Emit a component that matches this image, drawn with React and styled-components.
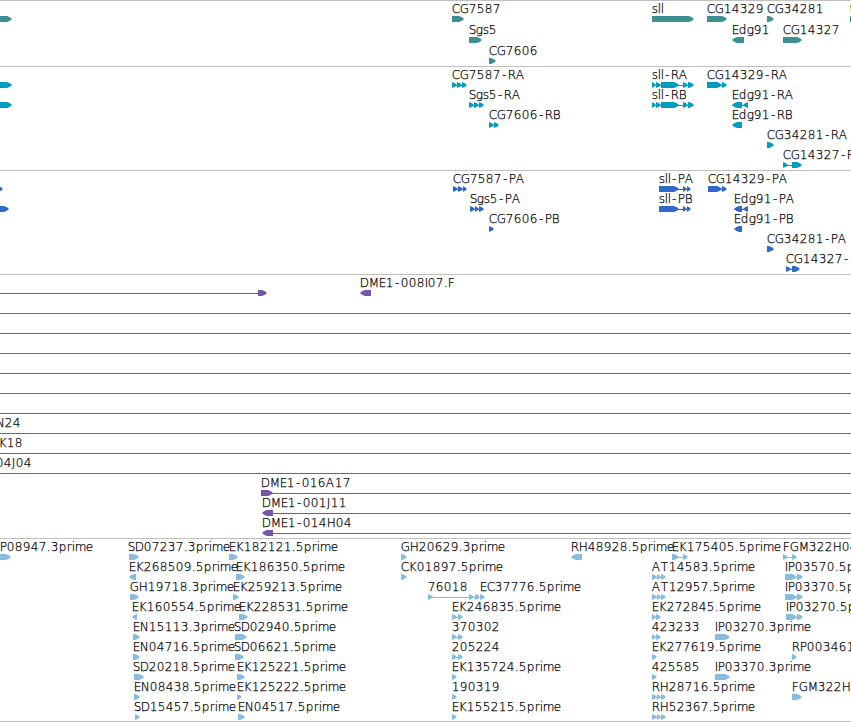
// React
import React from 'react'
import styled, { createGlobalStyle } from 'styled-components'

// Advance widths of the label font, in whole pixels (digits are 8)
const ADVANCES = {
  A: 9, B: 7, C: 8, D: 9, E: 7, F: 7, G: 9, H: 9, I: 3, J: 4, K: 8, M: 10,
  N: 9, P: 7, R: 8, S: 7, T: 8, d: 8, e: 7, g: 7, i: 3, l: 3, m: 11, p: 8,
  r: 5, s: 6, '-': 7, '.': 4
}

const HEAD = 5
const WIDTH = 851

// feature: [row, label, blocks, options]
const GENES = [
  [0, '', [[-20, 12]]],
  [0, 'CG7587', [[452, 464]]],
  [1, 'Sgs5', [[469, 482]]],
  [2, 'CG7606', [[489, 496]]],
  [0, 'sll', [[652, 694]]],
  [0, 'CG14329', [[707, 727]]],
  [1, 'Edg91', [[732, 744]], { reverse: true }],
  [0, 'CG34281', [[767, 774]]],
  [1, 'CG14327', [[783, 802]]],
  [0, 't', [[850, 870]]]
]

const TRANSCRIPTS = [
  [0, '', [[-20, 12]]],
  [1, '', [[-20, 12]]],
  [0, 'CG7587-RA', [[452, 457], [457, 462], [462, 467]]],
  [1, 'Sgs5-RA', [[469, 474], [474, 479], [479, 484]]],
  [2, 'CG7606-RB', [[489, 494], [494, 499]]],
  [0, 'sll-RA', [[652, 656], [656, 661], [661, 679], [683, 688], [688, 694]]],
  [1, 'sll-RB', [[652, 656], [656, 661], [661, 679], [683, 688], [688, 694]]],
  [0, 'CG14329-RA', [[707, 722], [722, 727]]],
  [1, 'Edg91-RA', [[732, 742], [743, 748]], { reverse: true }],
  [2, 'Edg91-RB', [[732, 742]], { reverse: true }],
  [3, 'CG34281-RA', [[767, 774]]],
  [4, 'CG14327-RA', [[783, 788], [792, 802]]]
]

const PROTEINS = [
  [0, '', [[-20, 3]]],
  [1, '', [[-20, 9]]],
  [0, 'CG7587-PA', [[453, 458], [458, 463], [463, 467]]],
  [1, 'Sgs5-PA', [[470, 475], [475, 479], [479, 484]]],
  [2, 'CG7606-PB', [[489, 494]]],
  [0, 'sll-PA', [[659, 679], [683, 687], [687, 691]]],
  [1, 'sll-PB', [[659, 679], [683, 687], [687, 691]]],
  [0, 'CG14329-PA', [[708, 722], [722, 727]]],
  [1, 'Edg91-PA', [[734, 742], [743, 748]], { reverse: true }],
  [2, 'Edg91-PB', [[734, 742]], { reverse: true }],
  [3, 'CG34281-PA', [[767, 774]]],
  [4, 'CG14327-', [[786, 791], [792, 800]]]
]

const BAC_ENDS = [
  [0, '', [[258, 267]], { line: [0, 260] }],
  [0, 'DME1-008I07.F', [[360, 371]], { reverse: true }],
  ...[1, 2, 3, 4, 5, 6].map(row => [row, '', [], { line: [0, WIDTH] }]),
  [7, 'N24', [], { line: [0, WIDTH], labelX: -4 }],
  [8, 'K18', [], { line: [0, WIDTH], labelX: -1 }],
  [9, '04J04', [], { line: [0, WIDTH], labelX: -4 }],
  [10, 'DME1-016A17', [[261, 273]], { line: [270, WIDTH] }],
  [11, 'DME1-001J11', [[262, 273]], { line: [270, WIDTH], reverse: true }],
  [12, 'DME1-014H04', [[262, 273]], { line: [270, WIDTH], reverse: true }]
]

const THREE = [[652, 657], [657, 661], [661, 666]]
const TWO = [[652, 656], [656, 661]]
const PAIR = [[452, 457], [458, 463]]

const ESTS = [
  [0, 'P08947.3prime', [[-10, 11]], { labelX: 0 }],
  [0, 'SD07237.3prime', [[129, 139]], { labelX: 128 }],
  [1, 'EK268509.5prime', [[129, 136]], { reverse: true }],
  [2, 'GH19718.3prime', [[130, 139]]],
  [3, 'EK160554.5prime', [[132, 137]], { reverse: true }],
  [4, 'EN15113.3prime', [[133, 140]]],
  [5, 'EN04716.5prime', [[133, 140]]],
  [6, 'SD20218.5prime', [[134, 144]], { labelX: 133 }],
  [7, 'EN08438.5prime', [[134, 140]]],
  [8, 'SD15457.5prime', [[135, 140]], { labelX: 134 }],
  [0, 'EK182121.5prime', [[229, 238]]],
  [1, 'EK186350.5prime', [[236, 245]]],
  [2, 'EK259213.5prime', [[233, 239]]],
  [3, 'EK228531.5prime', [[239, 248]]],
  [4, 'SD02940.5prime', [[235, 247]], { labelX: 234 }],
  [5, 'SD06621.5prime', [[235, 244]], { labelX: 234 }],
  [6, 'EK125221.5prime', [[237, 245]]],
  [7, 'EK125222.5prime', [[237, 242]]],
  [8, 'EN04517.5prime', [[238, 245]]],
  [0, 'GH20629.3prime', [[401, 407]]],
  [1, 'CK01897.5prime', [[401, 407]]],
  [2, '76018', [[428, 433], [469, 474], [475, 480]]],
  [2, 'EC37776.5prime', [[480, 485]]],
  [3, 'EK246835.5prime', PAIR],
  [4, '370302', PAIR],
  [5, '205224', PAIR],
  [6, 'EK135724.5prime', [[452, 457]]],
  [7, '190319', [[452, 457]]],
  [8, 'EK155215.5prime', [[452, 457]]],
  [0, 'RH48928.5prime', [[571, 582]], { reverse: true }],
  [0, 'EK175405.5prime', [[672, 679], [683, 688]]],
  [1, 'AT14583.5prime', THREE],
  [2, 'AT12957.5prime', THREE],
  [3, 'EK272845.5prime', TWO],
  [4, '423233', TWO],
  [5, 'EK277619.5prime', [[652, 657]]],
  [6, '425585', [[652, 657]]],
  [7, 'RH28716.5prime', THREE],
  [8, 'RH52367.5prime', THREE],
  [4, 'IP03270.3prime', [[715, 730]]],
  [6, 'IP03370.3prime', [[715, 730]]],
  [0, 'FGM322H04', [[783, 788], [792, 797]]],
  [1, 'IP03570.5p', [[785, 797], [797, 803]]],
  [2, 'IP03370.5p', [[785, 797], [797, 803]]],
  [3, 'IP03270.5p', [[786, 797], [797, 803]]],
  [5, 'RP003461', [[792, 797]]],
  [7, 'FGM322H', [[792, 802]]]
]

const TRACKS = [
  { name: 'genes', color: '#3d8f94', height: 66, pitch: 21, features: GENES },
  { name: 'transcripts', color: '#009dbf', height: 104, pitch: 20, features: TRANSCRIPTS },
  { name: 'proteins', color: '#2f6acb', height: 104, pitch: 20, features: PROTEINS },
  { name: 'bac-ends', color: '#7557a7', height: 264, pitch: 20, features: BAC_ENDS },
  { name: 'ests', color: '#87bcde', height: 183, pitch: 20, features: ESTS }
]

const charPositions = (text, start) => {
  let x = start - 0.3
  return text
    .split('')
    .map(char => {
      const current = char === '-' ? x + 1.2 : x
      x += ADVANCES[char] || 8
      return current
    })
    .join(' ')
}

// A block whose head bulges a little before it meets the tip
const blockPoints = ([x0, x1], y, reverse) => {
  const head = Math.min(HEAD, x1 - x0)
  const [tail, tip, dir] = reverse ? [x1, x0, 1] : [x0, x1, -1]
  const neck = tip + dir * head
  const cheek = tip + dir * 2
  return [
    [tail, y],
    [neck, y],
    [cheek, y + 1.3],
    [tip, y + 3],
    [cheek, y + 4.7],
    [neck, y + 6],
    [tail, y + 6]
  ].join(' ')
}

const Feature = ({ top, label, blocks, options = {} }) => {
  const { reverse, line, labelX } = options
  const span = line || (blocks.length > 1 && [blocks[0][0], blocks[blocks.length - 1][1] - 2])
  const start = labelX !== undefined ? labelX : blocks.length && blocks[0][0]
  return (
    <g>
      {span && <Connector x={span[0]} y={top + 18} width={span[1] - span[0]} height={1} />}
      {blocks.map((block, i) => (
        <polygon key={i} points={blockPoints(block, top + 15, reverse)} />
      ))}
      {label && (
        <Label x={charPositions(label, start)} y={top + 12}>
          {label}
        </Label>
      )}
    </g>
  )
}

const App = () => (
  <Browser>
    <GlobalStyle />
    {TRACKS.map(track => (
      <Track key={track.name} $height={track.height}>
        <Canvas $color={track.color}>
          {track.features.map(([row, label, blocks, options], i) => (
            <Feature
              key={i}
              top={row * track.pitch}
              label={label}
              blocks={blocks}
              options={options}
            />
          ))}
        </Canvas>
      </Track>
    ))}
  </Browser>
)

export default App

const GlobalStyle = createGlobalStyle`
  body {
    margin: 0;
    background: #fff;
  }
`

const Browser = styled.main`
  box-sizing: border-box;
  display: flex;
  flex-direction: column;
  width: ${WIDTH}px;
  height: 722px;
  overflow: hidden;
  border-bottom: 1px solid #c0c0c0;
`

const Track = styled.section`
  box-sizing: border-box;
  flex: none;
  height: ${props => props.$height}px;
  border-top: 1px solid #c0c0c0;
`

const Canvas = styled.svg`
  display: block;
  width: 100%;
  height: 100%;
  overflow: hidden;
  fill: ${props => props.$color};
`

const Connector = styled.rect`
  shape-rendering: crispEdges;
`

const Label = styled.text`
  fill: #000;
  stroke: #000;
  stroke-width: 0.25px;
  font-family: 'DejaVu Sans Light', 'DejaVu Sans', sans-serif;
  font-size: 12px;
  font-weight: 200;
`
